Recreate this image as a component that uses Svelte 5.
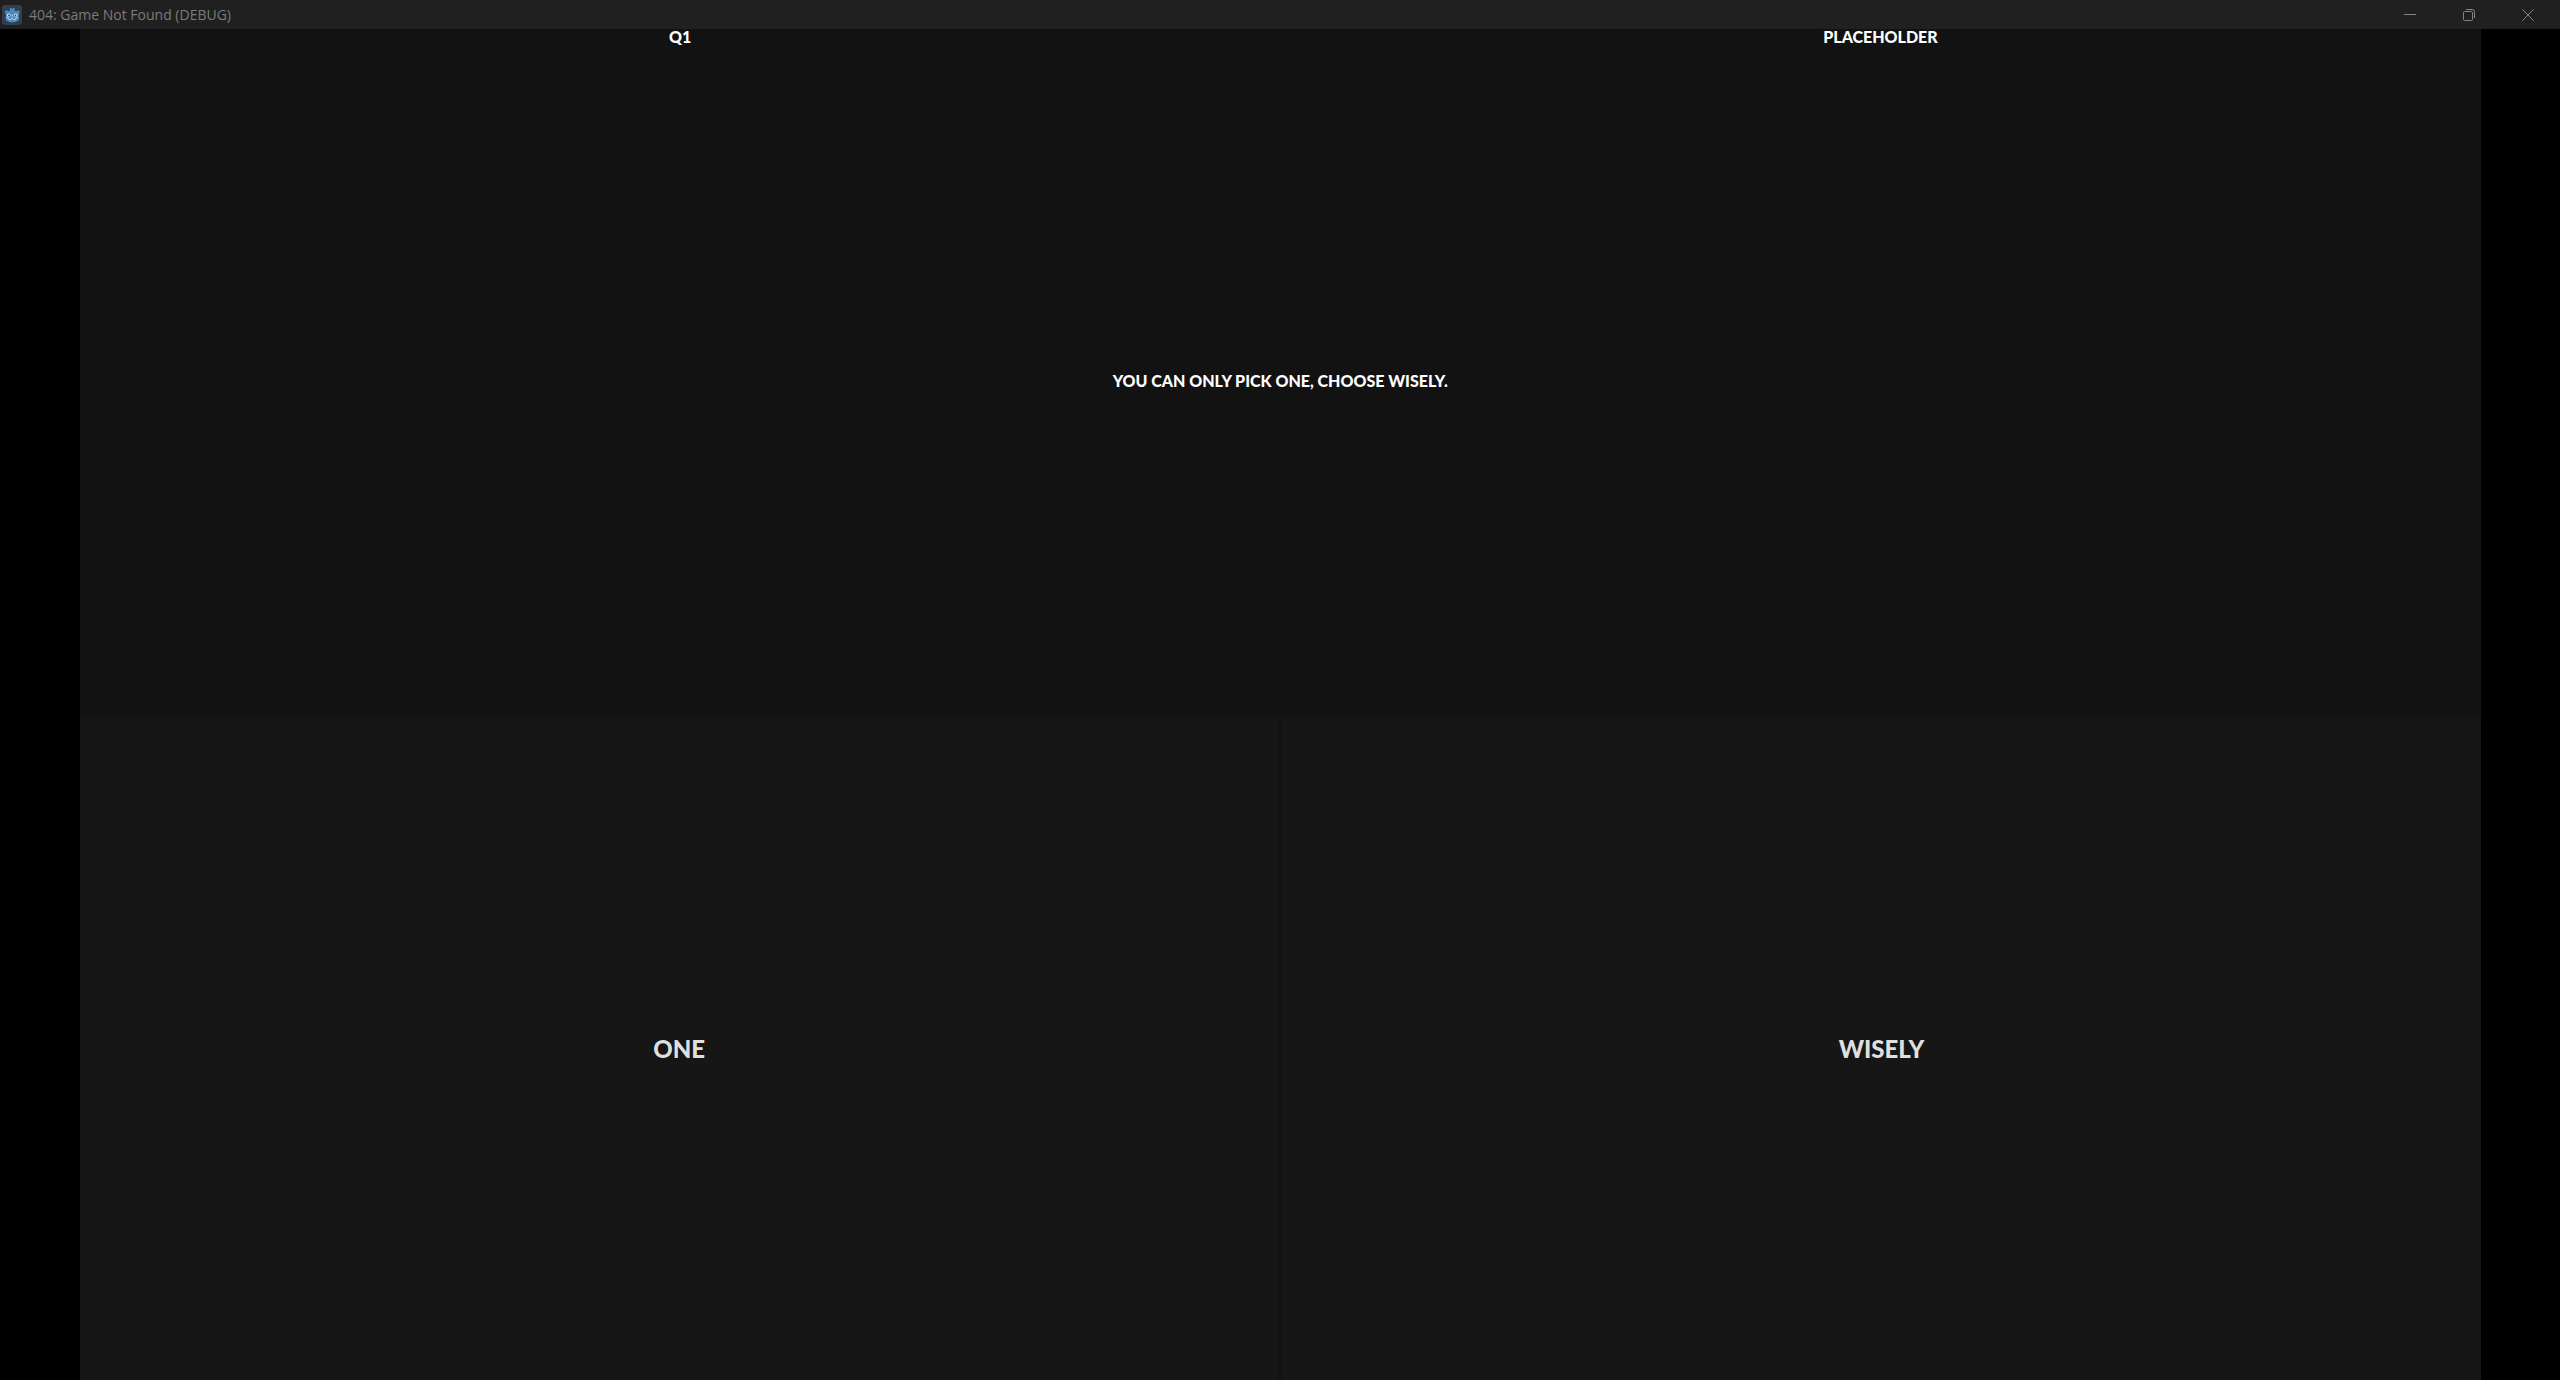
<script>
  const status = { question: 'Q1', hint: 'PLACEHOLDER' };
  const prompt = 'YOU CAN ONLY PICK ONE, CHOOSE WISELY.';
  const answers = ['ONE', 'WISELY'];
</script>

<div class="window">
  <header class="titlebar">
    <svg class="app-icon" viewBox="0 0 20 20" aria-hidden="true">
      <rect width="20" height="20" rx="3" fill="#363d52" />
      <path d="M2.500 7l1.800-2 2 1.200L8 5.700l-.2-2.500 1.700-.5.500 1.300h.6l.5-1.300 1.700.5-.2 2.500 1.500.5 2-1.200L18 7l-1.200 2v5c0 2-3 3.200-6.400 3.200S3.800 16 3.800 14V9z" fill="#478cbf" />
      <path d="M4 12.800h2.500l.5 1.800h2l.4-1h1.600l.4 1h2l.5-1.800h2.500" fill="none" stroke="#c9dce9" stroke-width=".8" />
      <circle cx="6.700" cy="10.300" r="1.700" fill="#e8f0f5" />
      <circle cx="13.700" cy="10.300" r="1.700" fill="#e8f0f5" />
      <circle cx="6.900" cy="10.400" r="1" fill="#414042" />
      <circle cx="13.500" cy="10.400" r="1" fill="#414042" />
      <path d="M10.200 9.800v1.800" stroke="#e8f0f5" stroke-width=".9" />
    </svg>
    <h1>404: Game Not Found (DEBUG)</h1>
    <div class="controls">
      <button aria-label="Minimize">
        <svg viewBox="0 0 12 12"><path d="M0 5.500h12" /></svg>
      </button>
      <button aria-label="Restore">
        <svg viewBox="0 0 12 12"><rect x=".5" y="2.500" width="9" height="9" rx="1" /><path d="M3 .5h6.500a2 2 0 0 1 2 2V9" /></svg>
      </button>
      <button aria-label="Close">
        <svg viewBox="0 0 12 12"><path d="M.3.3l11.400 11.400M11.700.3L.3 11.700" /></svg>
      </button>
    </div>
  </header>

  <main>
    <section class="question">
      <div class="status">
        <span>{status.question}</span>
        <span>{status.hint}</span>
      </div>
      <p>{prompt}</p>
    </section>
    <div class="answers">
      {#each answers as answer}
        <button>{answer}</button>
      {/each}
    </div>
  </main>
</div>

<style>
  :global(body) {
    margin: 0;
    background: #000;
  }
  .window {
    display: flex;
    flex-direction: column;
    min-height: 100vh;
    color: #fff;
    font-family: Lato, sans-serif;
    font-size: 16px;
    font-weight: 900;
  }
  button {
    border: 0;
    padding: 0;
    font: inherit;
  }
  .titlebar {
    display: flex;
    align-items: center;
    height: 29px;
    padding: 0 3px 0 2px;
    box-sizing: border-box;
    background: #202020;
  }
  .app-icon {
    width: 20px;
    height: 20px;
  }
  h1 {
    margin: 0 0 0 7px;
    color: #7b7b7b;
    font: 400 14px/18px 'Open Sans', sans-serif;
  }
  .controls {
    display: flex;
    align-self: stretch;
    margin-left: auto;
  }
  .controls button {
    display: grid;
    place-items: center;
    width: 59px;
    background: transparent;
  }
  .controls svg {
    width: 12px;
    height: 12px;
    fill: none;
    stroke: #858585;
  }
  main {
    flex: 1;
    display: grid;
    grid-template-rows: 687fr 663fr;
    margin: 0 3.1% 0 3.125%;
    background: #121212;
  }
  .question {
    display: flex;
    flex-direction: column;
    text-align: center;
  }
  .status {
    display: grid;
    grid-template-columns: 1fr 1fr;
    line-height: 16px;
  }
  .question p {
    display: grid;
    place-items: center;
    flex: 1;
    margin: 0;
  }
  .answers {
    display: grid;
    grid-template-columns: 1fr 1fr;
    gap: 4px;
  }
  .answers button {
    background: #161616;
    color: #dfdfdf;
    font-size: 24px;
  }
</style>
